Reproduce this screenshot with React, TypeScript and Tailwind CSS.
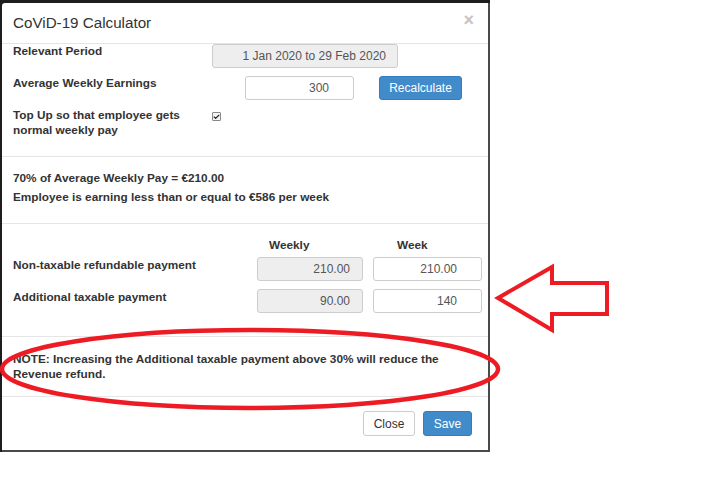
import { Check } from "lucide-react";

function Field({ value, grey, className }: { value: string; grey?: boolean; className: string }) {
  return (
    <input
      readOnly
      value={value}
      className={`h-[24px] rounded-[3px] border border-[#ccc] text-right text-[12px] text-[#555] outline-none ${
        grey ? "bg-[#eee]" : "bg-white"
      } ${className}`}
    />
  );
}

function App() {
  return (
    <div className="relative h-[495px] w-[720px] overflow-hidden bg-white font-['Liberation_Sans',Arial,sans-serif] text-[#333]">
      <div className="h-[452px] w-[490px] bg-[#1d1d1d] pl-[2px] pt-[3px]">
        <div className="flex h-full flex-col rounded-tl-[3px] border-b-2 border-r-2 border-[#4a4a4a] bg-white">
          {/* Header */}
          <div className="flex h-[41px] items-center justify-between border-b border-[#e5e5e5] pl-[11px] pr-[14px]">
            <h4 className="text-[15.2px] leading-none">CoViD-19 Calculator</h4>
            <span className="mb-[6px] text-[18px] font-bold leading-none text-[#c4c4c4]">×</span>
          </div>

          {/* Period / earnings */}
          <div className="border-b border-[#e5e5e5] pb-[18px] pl-[11px] text-[11.8px] font-bold leading-[15px]">
            <div className="flex items-start">
              <label className="w-[199px]">Relevant Period</label>
              <Field value="1 Jan 2020 to 29 Feb 2020" grey className="w-[186px] pr-[11px] font-normal" />
            </div>
            <div className="mt-[8px] flex items-start">
              <label className="w-[199px]">Average Weekly Earnings</label>
              <Field value="300" className="ml-[33px] w-[109px] pr-[24px] font-normal" />
              <button className="ml-[25px] h-[24px] w-[83px] rounded-[3px] border border-[#357ebd] bg-[#428bca] text-[12px] font-normal text-white">
                Recalculate
              </button>
            </div>
            <div className="mt-[8px] flex items-start">
              <label className="w-[199px]">Top Up so that employee gets normal weekly pay</label>
              <span className="mt-[4px] flex h-[9px] w-[9px] items-center justify-center rounded-[1px] border border-[#888] bg-[#f4f4f4]">
                <Check className="h-[8px] w-[8px] text-[#222]" strokeWidth={4} />
              </span>
            </div>
          </div>

          {/* Summary */}
          <div className="border-b border-[#e5e5e5] pb-[18px] pl-[11px] pt-[14px] text-[11.8px] font-bold leading-[15px]">
            <p>70% of Average Weekly Pay = €210.00</p>
            <p className="mt-[4px]">Employee is earning less than or equal to €586 per week</p>
          </div>

          {/* Payments */}
          <div className="border-b border-[#e5e5e5] pb-[23px] pl-[11px] pt-[14px] text-[11.8px] font-bold leading-[15px]">
            <div className="flex">
              <span className="w-[244px]" />
              <span className="w-[106px] pl-[12px]">Weekly</span>
              <span className="ml-[10px] pl-[24px]">Week</span>
            </div>
            <div className="mt-[4px] flex items-start">
              <label className="w-[244px] pt-[1px]">Non-taxable refundable payment</label>
              <Field value="210.00" grey className="w-[106px] pr-[12px] font-normal" />
              <Field value="210.00" className="ml-[10px] w-[109px] pr-[24px] font-normal" />
            </div>
            <div className="mt-[8px] flex items-start">
              <label className="w-[244px] pt-[1px]">Additional taxable payment</label>
              <Field value="90.00" grey className="w-[106px] pr-[12px] font-normal" />
              <Field value="140" className="ml-[10px] w-[109px] pr-[24px] font-normal" />
            </div>
          </div>

          {/* Note */}
          <div className="border-b border-[#e5e5e5] pb-[14px] pl-[11px] pr-[15px] pt-[15px] text-[11.8px] font-bold leading-[15px]">
            NOTE: Increasing the Additional taxable payment above 30% will reduce the Revenue refund.
          </div>

          {/* Footer */}
          <div className="flex flex-1 items-start justify-end gap-[8px] pr-[16px] pt-[14px] text-[12px]">
            <button className="h-[25px] w-[52px] rounded-[3px] border border-[#ccc] bg-white text-[#333]">Close</button>
            <button className="h-[25px] w-[49px] rounded-[3px] border border-[#357ebd] bg-[#428bca] text-white">Save</button>
          </div>
        </div>
      </div>

      {/* Red annotations drawn over the screenshot */}
      <svg className="pointer-events-none absolute left-0 top-0" width="720" height="495">
        <ellipse cx="250" cy="369" rx="248" ry="39" fill="none" stroke="#ed1c24" strokeWidth="4.5" />
        <polygon
          points="498,298 552,267 552,283 607,283 607,314 552,314 552,330"
          fill="none"
          stroke="#ed1c24"
          strokeWidth="4"
        />
      </svg>
    </div>
  );
}

export default App;
